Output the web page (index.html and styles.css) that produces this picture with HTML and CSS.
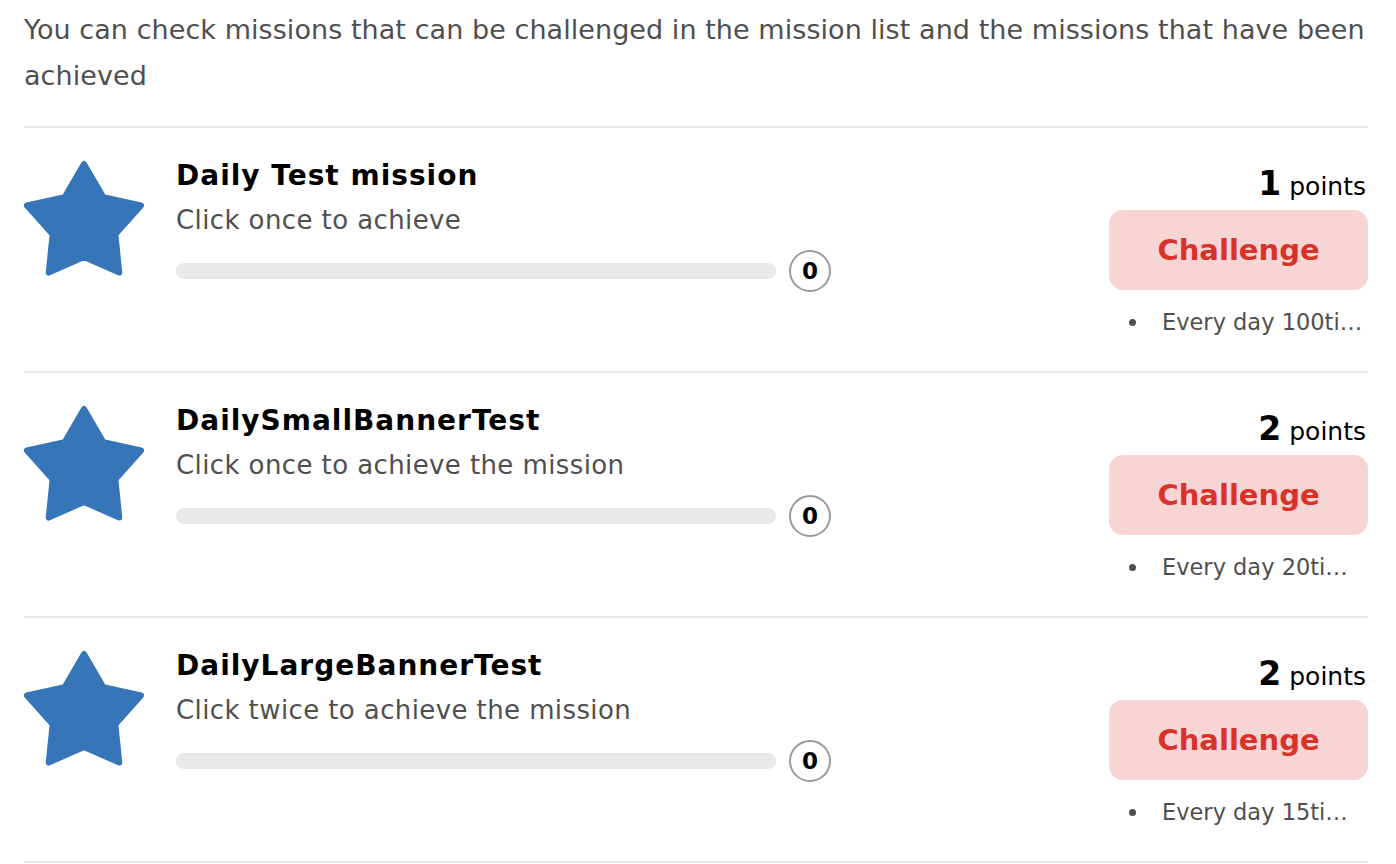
FILE: index.html
```html
<!DOCTYPE html>
<html lang="en">
<head>
<meta charset="utf-8">
<title>Missions</title>
<link rel="stylesheet" href="styles.css">
</head>
<body>
<main class="page">
  <p class="intro">You can check missions that can be challenged in the mission list and the missions that have been achieved</p>
  <ul class="missions">
    <li class="mission">
      <svg class="star" viewBox="0 0 120 116" aria-hidden="true"><polygon points="60,3 79.4,36.3 117.07,44.46 91.39,73.2 95.27,111.54 60,96 24.73,111.54 28.61,73.2 2.93,44.46 40.6,36.3"/></svg>
      <div class="info">
        <h2 class="title">Daily Test mission</h2>
        <p class="desc">Click once to achieve</p>
        <div class="progress-row">
          <div class="bar"></div>
          <span class="count">0</span>
        </div>
      </div>
      <div class="side">
        <div class="points"><b>1</b> points</div>
        <button class="challenge">Challenge</button>
        <ul class="notes"><li><span class="note-text">Every day 100ti…</span></li></ul>
      </div>
    </li>
    <li class="mission">
      <svg class="star" viewBox="0 0 120 116" aria-hidden="true"><polygon points="60,3 79.4,36.3 117.07,44.46 91.39,73.2 95.27,111.54 60,96 24.73,111.54 28.61,73.2 2.93,44.46 40.6,36.3"/></svg>
      <div class="info">
        <h2 class="title">DailySmallBannerTest</h2>
        <p class="desc">Click once to achieve the mission</p>
        <div class="progress-row">
          <div class="bar"></div>
          <span class="count">0</span>
        </div>
      </div>
      <div class="side">
        <div class="points"><b>2</b> points</div>
        <button class="challenge">Challenge</button>
        <ul class="notes"><li><span class="note-text">Every day 20ti…</span></li></ul>
      </div>
    </li>
    <li class="mission">
      <svg class="star" viewBox="0 0 120 116" aria-hidden="true"><polygon points="60,3 79.4,36.3 117.07,44.46 91.39,73.2 95.27,111.54 60,96 24.73,111.54 28.61,73.2 2.93,44.46 40.6,36.3"/></svg>
      <div class="info">
        <h2 class="title">DailyLargeBannerTest</h2>
        <p class="desc">Click twice to achieve the mission</p>
        <div class="progress-row">
          <div class="bar"></div>
          <span class="count">0</span>
        </div>
      </div>
      <div class="side">
        <div class="points"><b>2</b> points</div>
        <button class="challenge">Challenge</button>
        <ul class="notes"><li><span class="note-text">Every day 15ti…</span></li></ul>
      </div>
    </li>
  </ul>
</main>
</body>
</html>
```

FILE: styles.css
```css
* { box-sizing: border-box; }

body {
  margin: 0;
  background: #fff;
  font-family: "DejaVu Sans", "Liberation Sans", sans-serif;
  color: #4f4f4f;
}

.page {
  padding: 7px 28px 0 24px;
}

.intro {
  margin: 0 0 27px;
  font-size: 27px;
  line-height: 46px;
  letter-spacing: 0.06px;
  color: #4f4f4f;
}

.missions {
  list-style: none;
  margin: 0;
  padding: 0;
  border-top: 2px solid #e9e9e9;
}

.mission {
  display: flex;
  align-items: flex-start;
  padding: 30px 0 33px;
  border-bottom: 2px solid #e9e9e9;
}

.star {
  width: 120px;
  height: 116px;
  margin-top: 3px;
  flex: none;
  overflow: visible;
}

.star polygon {
  fill: #3575b8;
  stroke: #3575b8;
  stroke-width: 6;
  stroke-linejoin: round;
}

.info {
  margin-left: 32px;
  flex: 1;
}

.title {
  margin: 0;
  font-size: 28px;
  line-height: 36px;
  letter-spacing: 1px;
  font-weight: bold;
  color: #000;
}

.desc {
  margin: 8px 0 0;
  font-size: 26px;
  line-height: 36px;
  letter-spacing: 0.4px;
  color: #4f4f4f;
}

.progress-row {
  display: flex;
  align-items: center;
  margin-top: 12px;
}

.bar {
  width: 600px;
  height: 16px;
  border-radius: 8px;
  background: #e9e9e9;
}

.count {
  display: flex;
  align-items: center;
  justify-content: center;
  width: 42px;
  height: 42px;
  margin-left: 13px;
  border: 2px solid #9a9a9a;
  border-radius: 50%;
  font-size: 23px;
  font-weight: bold;
  color: #000;
}

.side {
  width: 259px;
  flex: none;
  display: flex;
  flex-direction: column;
  align-items: flex-end;
}

.points {
  margin-top: 8px;
  height: 36px;
  line-height: 36px;
  font-size: 25px;
  color: #000;
  padding-right: 2px;
}

.points b {
  font-size: 33px;
}

.challenge {
  margin-top: 8px;
  width: 259px;
  height: 80px;
  border: none;
  border-radius: 14px;
  background: #f8d5d5;
  color: #d8322b;
  font-family: inherit;
  font-size: 29px;
  font-weight: bold;
  cursor: pointer;
}

.notes {
  align-self: stretch;
  margin: 16px 0 0;
  padding: 0 2px 0 20px;
  list-style: none;
  font-size: 22.5px;
  line-height: 32px;
  color: #4f4f4f;
}

.notes li {
  display: flex;
  align-items: center;
}

.notes li::before {
  content: "";
  flex: none;
  width: 7px;
  height: 7px;
  margin-right: 26px;
  border-radius: 50%;
  background: #4f4f4f;
}

.note-text {
  white-space: nowrap;
}
```
